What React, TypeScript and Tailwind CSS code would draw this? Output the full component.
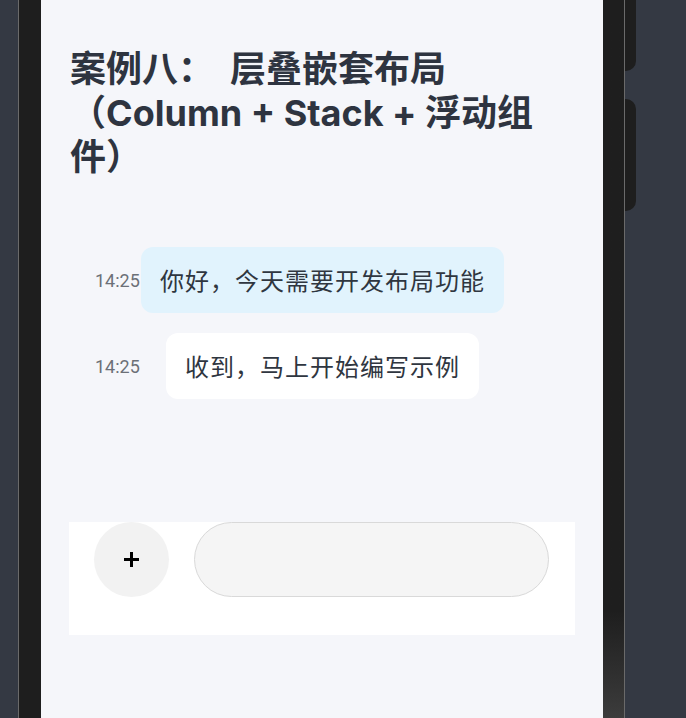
export default function App() {
  const messages = [
    { time: "14:25", text: "你好，今天需要开发布局功能", bg: "bg-[#e1f3fd]", gap: "gap-0" },
    { time: "14:25", text: "收到，马上开始编写示例", bg: "bg-white", gap: "gap-[25px]" },
  ];

  return (
    <div className="w-[686px] h-[718px] overflow-hidden bg-[#343943] flex pl-[18px] font-['Noto_Sans_CJK_SC',sans-serif]">
      {/* phone frame */}
      <div className="w-[607px] h-full border-x border-[#6a6a6a] flex shrink-0">
        <div className="w-[22px] h-full bg-[#1e1e1e]" />
        <div className="w-[562px] h-full bg-[#f5f6fa] px-[28px] flex flex-col">
          <h1 className="mt-[47px] text-[36px] leading-[44px] font-bold text-[#2e3440] font-['Inter','Noto_Sans_CJK_SC',sans-serif] pl-px">
            案例八：<span className="inline-block w-[16px]" />层叠嵌套布局（Column + Stack + 浮动组件）
          </h1>

          <div className="mt-[68px] flex flex-col gap-[20px] pl-[26px]">
            {messages.map((m, i) => (
              <div key={i} className={`flex items-center ${m.gap}`}>
                <span className="text-[18px] text-[#6c7077] font-['Roboto',sans-serif] w-[46px]">{m.time}</span>
                <div className={`${m.bg} h-[66px] rounded-[12px] px-[19px] flex items-center text-[24px] tracking-[1px] text-[#2f3640]`}>
                  {m.text}
                </div>
              </div>
            ))}
          </div>

          {/* floating input bar */}
          <div className="mt-[123px] h-[113px] bg-white flex items-start gap-[25px] pl-[25px] pr-[26px]">
            <button className="w-[75px] h-[75px] rounded-full bg-[#f2f2f2] flex items-center justify-center shrink-0">
              <svg width="15" height="15" viewBox="0 0 15 15">
                <path d="M7.5 0v15M0 7.5h15" stroke="#000" strokeWidth="3" />
              </svg>
            </button>
            <div className="flex-1 h-[75px] rounded-full bg-[#f5f5f5] border-[1.5px] border-[#d9d9d9]" />
          </div>
        </div>
        <div className="w-[21px] h-full bg-linear-to-b from-[#1e1e1e] from-85% to-[#3c3c3c]" />
      </div>

      {/* side buttons */}
      <div className="flex flex-col w-[11px]">
        <div className="h-[71px] bg-[#1e1e1e] rounded-br-[10px]" />
        <div className="mt-[28px] h-[112px] bg-[#1e1e1e] rounded-r-[10px]" />
      </div>
    </div>
  );
}
